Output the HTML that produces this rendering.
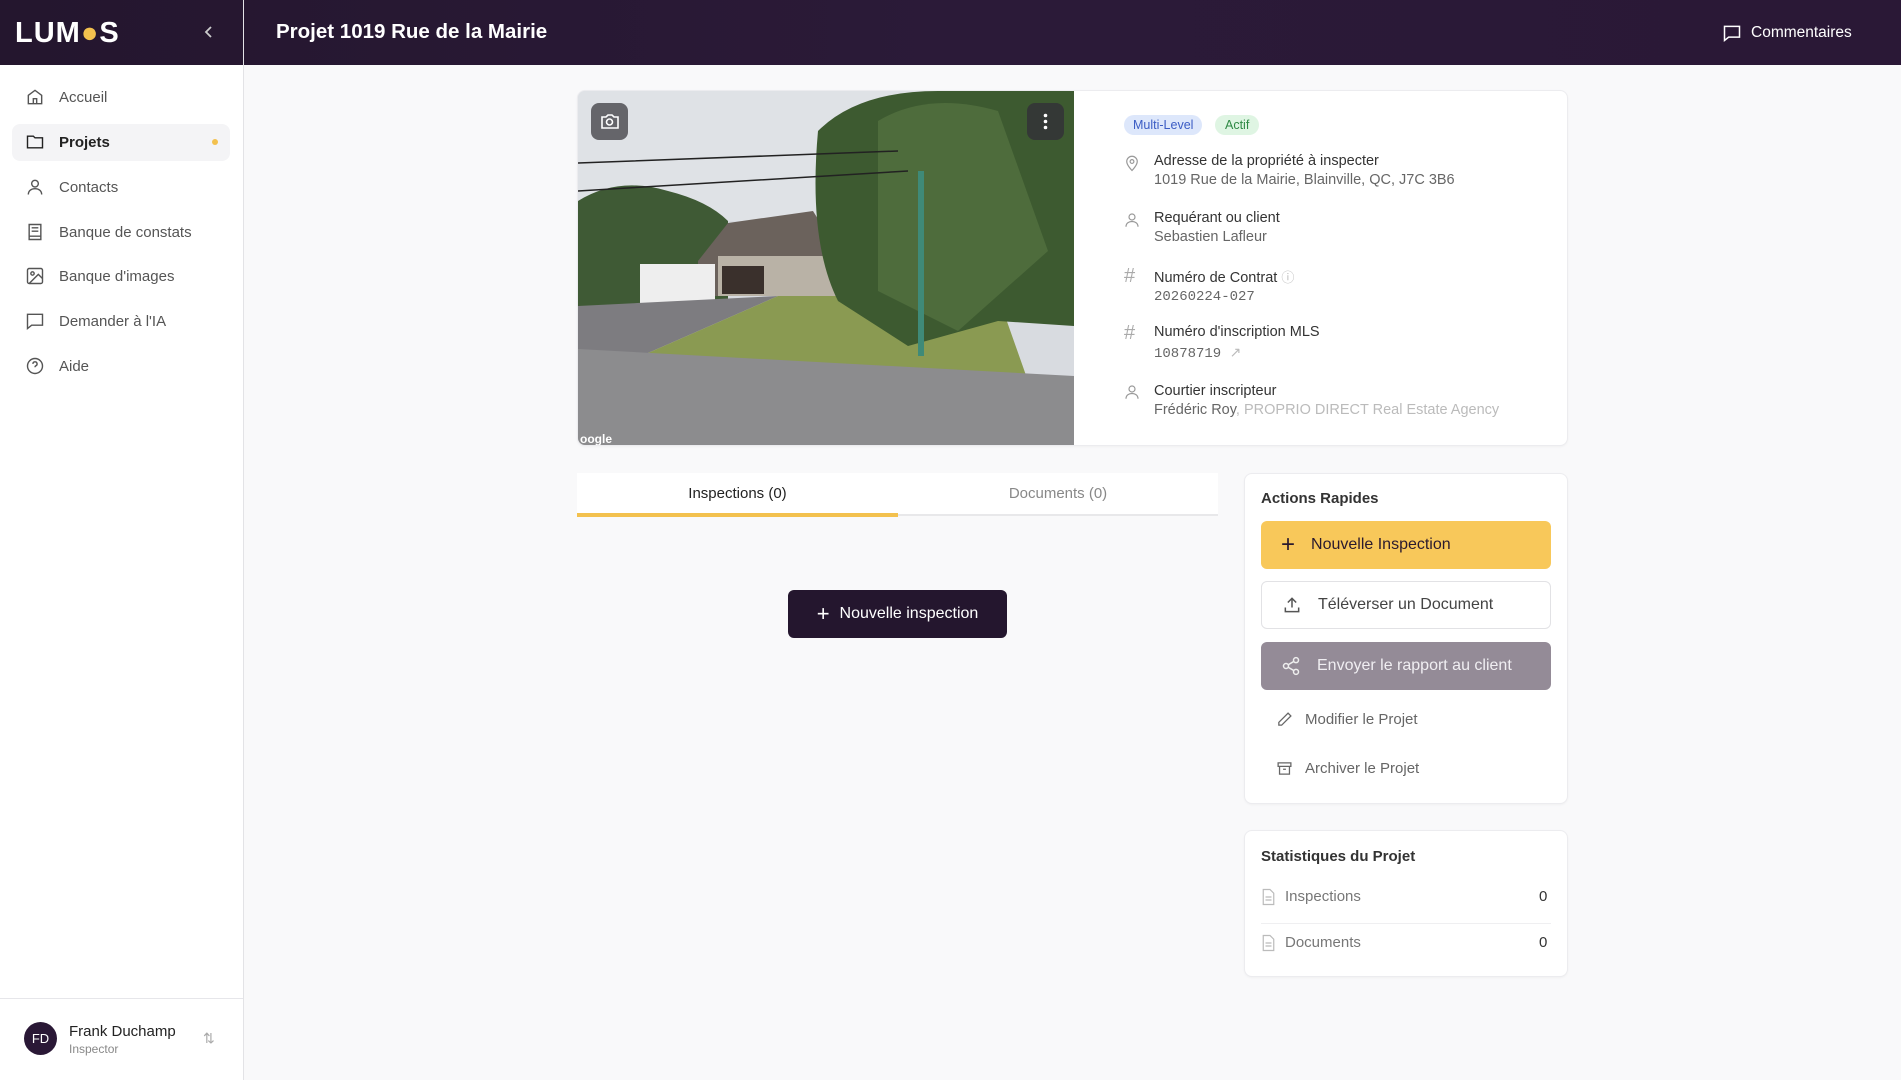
<!DOCTYPE html>
<html><head><meta charset="utf-8"><style>
*{box-sizing:border-box;margin:0;padding:0}
body{width:1901px;height:1080px;overflow:hidden;background:#f9f9fa;font-family:"Liberation Sans",sans-serif;color:#222;position:relative}
.hdr{position:absolute;left:0;top:0;width:1901px;height:65px;background:linear-gradient(90deg,#24162e,#2b1a38 50%,#2a1836);}
.sep{position:absolute;left:243px;top:0;width:1px;height:1080px;background:#e3e3e6}
.side{position:absolute;left:0;top:65px;width:243px;height:1015px;background:#fff}
.logo{position:absolute;left:15px;top:17px;font-size:29px;font-weight:bold;color:#fff;letter-spacing:1px}
.nav{position:absolute;left:25px;font-size:15px;color:#555;display:flex;align-items:center;gap:14px}
.nav svg{width:20px;height:20px;fill:none;stroke:#555;stroke-width:1.7}
.abs{position:absolute}
.card{position:absolute;background:#fff;border:1px solid #ececef;border-radius:8px;box-shadow:0 1px 2px rgba(0,0,0,.04)}
.ic{fill:none;stroke:#999;stroke-width:1.6}
.lbl{font-size:14.5px;color:#333}
.val{font-size:14.5px;color:#666;margin-top:5px}
.mono{font-family:"Liberation Mono",monospace;font-size:14px}
.btn{position:absolute;left:1261px;width:290px;height:48px;border-radius:6px;display:flex;align-items:center;padding-left:20px;gap:16px;font-size:16px}
</style></head><body>
<div class="hdr"></div>
<div class="sep"></div>
<div class="logo">LUM<span style="color:#f3c14e">●</span>S</div>
<svg class="abs" style="left:202px;top:24px" width="14" height="16" viewBox="0 0 14 16"><path d="M9 3L4 8l5 5" stroke="#ccc" stroke-width="1.8" fill="none"/></svg>
<div class="abs" style="left:276px;top:20px;font-size:20.5px;font-weight:bold;color:#fff">Projet 1019 Rue de la Mairie</div>
<svg class="abs" style="left:1722px;top:23px" width="20" height="20" viewBox="0 0 24 24"><path d="M3 4h18v13H8l-5 4z" stroke="#fff" stroke-width="1.8" fill="none"/></svg>
<div class="abs" style="left:1751px;top:24px;font-size:15.5px;color:#fff">Commentaires</div>

<div class="side"></div>
<div class="abs" style="left:12px;top:124px;width:218px;height:37px;background:#f4f4f6;border-radius:8px"></div>
<div class="abs" style="left:212px;top:139px;width:6px;height:6px;border-radius:50%;background:#f3c14e"></div>
<div class="nav" style="top:87px"><svg viewBox="0 0 24 24"><path d="M4 10l8-6 8 6v10H4zM10 20v-6h4v6"/></svg>Accueil</div>
<div class="nav" style="top:132px;color:#222;font-weight:bold"><svg viewBox="0 0 24 24" style="stroke:#222"><path d="M3 5h7l2 2h9v12H3z"/></svg>Projets</div>
<div class="nav" style="top:177px"><svg viewBox="0 0 24 24"><circle cx="12" cy="8" r="4"/><path d="M4 21c0-5 4-7 8-7s8 2 8 7"/></svg>Contacts</div>
<div class="nav" style="top:222px"><svg viewBox="0 0 24 24"><path d="M5 3h14v18H5zM8 7h8M8 11h8M5 17h14"/></svg>Banque de constats</div>
<div class="nav" style="top:266px"><svg viewBox="0 0 24 24"><rect x="3" y="3" width="18" height="18" rx="2"/><circle cx="9" cy="9" r="2"/><path d="M21 15l-5-5L5 21"/></svg>Banque d'images</div>
<div class="nav" style="top:311px"><svg viewBox="0 0 24 24"><path d="M3 4h18v13H8l-5 4z"/></svg>Demander à l'IA</div>
<div class="nav" style="top:356px"><svg viewBox="0 0 24 24"><circle cx="12" cy="12" r="9"/><path d="M9.5 9.5a2.5 2.5 0 1 1 3.5 2.3c-.7.3-1 .8-1 1.7M12 17h.01"/></svg>Aide</div>
<div class="abs" style="left:0;top:998px;width:243px;height:1px;background:#e6e6ea"></div>
<div class="abs" style="left:24px;top:1022px;width:33px;height:33px;border-radius:50%;background:#2a1836;color:#fff;font-size:13px;display:flex;align-items:center;justify-content:center">FD</div>
<div class="abs" style="left:69px;top:1023px;font-size:15px;color:#222">Frank Duchamp</div>
<div class="abs" style="left:69px;top:1042px;font-size:12px;color:#888">Inspector</div>
<div class="abs" style="left:203px;top:1030px;font-size:14px;color:#aaa">⇅</div>

<!-- top card -->
<div class="card" style="left:577px;top:90px;width:991px;height:356px;overflow:hidden">
<svg class="abs" style="left:0;top:0" width="496" height="356" viewBox="0 0 496 356" preserveAspectRatio="none">
<rect width="496" height="356" fill="#d8dbe0"/>
<rect y="0" width="496" height="130" fill="#dfe2e6"/>
<path d="M0 110 Q40 85 90 100 Q130 110 150 130 L150 215 L0 215z" fill="#3f5a35"/>
<path d="M120 170 L150 132 L235 120 L260 160 L260 205 L120 205z" fill="#6b625c"/>
<rect x="140" y="165" width="120" height="40" fill="#b9b2a6"/>
<rect x="144" y="175" width="42" height="28" fill="#3a302c"/>
<rect x="62" y="173" width="75" height="40" fill="#eeeeee"/>
<path d="M0 215 L200 205 L70 262 L0 262z" fill="#7d7c80"/>
<path d="M70 262 L200 205 L420 205 L450 290 L0 280z" fill="#8a9a52"/>
<path d="M240 40 Q280 0 360 0 L496 0 L496 235 L420 230 L330 255 L260 210 Q230 150 240 40z" fill="#3d5a30"/>
<path d="M300 30 Q350 0 420 20 L470 160 L380 240 L300 200z" fill="#4e6c3c"/>
<rect x="340" y="80" width="6" height="185" fill="#3f8a78"/>
<path d="M0 258 L496 285 L496 356 L0 356z" fill="#8c8c8e"/>
<path d="M0 72 L320 60 M0 100 L330 80" stroke="#222" stroke-width="1.5"/>
<text x="2" y="352" font-size="12" fill="#fff" font-family="Liberation Sans" font-weight="bold">oogle</text>
</svg>
<div class="abs" style="left:13px;top:12px;width:37px;height:37px;border-radius:8px;background:rgba(70,70,75,.8)"><svg width="37" height="37" viewBox="0 0 37 37"><path d="M11 14h4l2-2h4l2 2h4v11H11z" stroke="#fff" stroke-width="1.6" fill="none"/><circle cx="18.5" cy="19" r="3" stroke="#fff" stroke-width="1.6" fill="none"/></svg></div>
<div class="abs" style="left:449px;top:12px;width:37px;height:37px;border-radius:8px;background:rgba(50,50,55,.85)"><svg width="37" height="37"><circle cx="18.5" cy="12.5" r="1.8" fill="#fff"/><circle cx="18.5" cy="18.5" r="1.8" fill="#fff"/><circle cx="18.5" cy="24.5" r="1.8" fill="#fff"/></svg></div>
<div class="abs" style="left:546px;top:24px;padding:3px 9px;border-radius:10px;background:#dde7fb;color:#3b5cc4;font-size:12.5px">Multi-Level</div>
<div class="abs" style="left:637px;top:24px;padding:3px 10px;border-radius:10px;background:#dff5e3;color:#2f8a45;font-size:12.5px">Actif</div>
<svg class="abs" style="left:545px;top:62px" width="18" height="20" viewBox="0 0 24 24"><path class="ic" d="M12 22s7-7 7-12a7 7 0 0 0-14 0c0 5 7 12 7 12z"/><circle class="ic" cx="12" cy="10" r="2.5"/></svg>
<div class="abs" style="left:576px;top:62px"><div class="lbl">Adresse de la propriété à inspecter</div><div class="val" style="margin-top:3px">1019 Rue de la Mairie, Blainville, QC, J7C 3B6</div></div>
<svg class="abs" style="left:545px;top:119px" width="18" height="20" viewBox="0 0 24 24"><circle class="ic" cx="12" cy="8" r="4"/><path class="ic" d="M4 21c0-5 4-7 8-7s8 2 8 7"/></svg>
<div class="abs" style="left:576px;top:119px"><div class="lbl">Requérant ou client</div><div class="val" style="margin-top:3px">Sebastien Lafleur</div></div>
<div class="abs" style="left:546px;top:174px;font-size:20px;color:#aaa">#</div>
<div class="abs" style="left:576px;top:176px"><div class="lbl">Numéro de Contrat <span style="color:#bbb;font-size:13px">ⓘ</span></div><div class="val mono" style="margin-top:3px">20260224-027</div></div>
<div class="abs" style="left:546px;top:231px;font-size:20px;color:#aaa">#</div>
<div class="abs" style="left:576px;top:233px"><div class="lbl">Numéro d'inscription MLS</div><div class="val mono" style="margin-top:4px">10878719 <span style="color:#bbb;font-family:'Liberation Sans'">↗</span></div></div>
<svg class="abs" style="left:545px;top:291px" width="18" height="20" viewBox="0 0 24 24"><circle class="ic" cx="12" cy="8" r="4"/><path class="ic" d="M4 21c0-5 4-7 8-7s8 2 8 7"/></svg>
<div class="abs" style="left:576px;top:292px"><div class="lbl">Courtier inscripteur</div><div class="val" style="margin-top:3px">Frédéric Roy<span style="color:#bbb">, PROPRIO DIRECT Real Estate Agency</span></div></div>
</div>

<!-- tabs -->
<div class="abs" style="left:577px;top:473px;width:641px;height:43px;background:#fff;border-bottom:2px solid #e8e8ea"></div>
<div class="abs" style="left:577px;top:513px;width:321px;height:4px;background:#f3c14e"></div>
<div class="abs" style="left:577px;top:485px;width:321px;text-align:center;font-size:15px;color:#222">Inspections (0)</div>
<div class="abs" style="left:898px;top:485px;width:320px;text-align:center;font-size:15px;color:#888">Documents (0)</div>
<div class="abs" style="left:788px;top:590px;width:219px;height:48px;background:#24162e;border-radius:6px;color:#fff;font-size:16px;display:flex;align-items:center;justify-content:center;gap:10px"><span style="font-size:22px;font-weight:300">+</span>Nouvelle inspection</div>

<!-- actions -->
<div class="card" style="left:1244px;top:473px;width:324px;height:331px"></div>
<div class="abs" style="left:1261px;top:490px;font-size:15px;font-weight:bold;color:#333">Actions Rapides</div>
<div class="btn" style="top:521px;background:#f8c85a;color:#2a1a2e"><span style="font-size:24px;font-weight:300">+</span>Nouvelle Inspection</div>
<div class="btn" style="top:581px;background:#fff;border:1px solid #e2e2e5;color:#444"><svg width="20" height="20" viewBox="0 0 24 24"><path d="M12 15V4M7 9l5-5 5 5M4 15v5h16v-5" stroke="#555" stroke-width="1.8" fill="none"/></svg>Téléverser un Document</div>
<div class="btn" style="top:642px;background:#948b97;color:#f0eef2"><svg width="20" height="20" viewBox="0 0 24 24"><circle cx="18" cy="5" r="3" stroke="#eee" stroke-width="1.8" fill="none"/><circle cx="6" cy="12" r="3" stroke="#eee" stroke-width="1.8" fill="none"/><circle cx="18" cy="19" r="3" stroke="#eee" stroke-width="1.8" fill="none"/><path d="M8.6 13.5l6.8 4M15.4 6.5l-6.8 4" stroke="#eee" stroke-width="1.8"/></svg>Envoyer le rapport au client</div>
<svg class="abs" style="left:1276px;top:711px" width="17" height="17" viewBox="0 0 24 24"><path d="M17 3l4 4L8 20H4v-4z" stroke="#666" stroke-width="1.8" fill="none"/></svg>
<div class="abs" style="left:1305px;top:711px;font-size:15px;color:#666">Modifier le Projet</div>
<svg class="abs" style="left:1276px;top:760px" width="17" height="17" viewBox="0 0 24 24"><path d="M3 4h18v5H3zM5 9v11h14V9M10 13h4" stroke="#666" stroke-width="1.8" fill="none"/></svg>
<div class="abs" style="left:1305px;top:760px;font-size:15px;color:#666">Archiver le Projet</div>

<!-- stats -->
<div class="card" style="left:1244px;top:830px;width:324px;height:147px"></div>
<div class="abs" style="left:1261px;top:848px;font-size:15px;font-weight:bold;color:#333">Statistiques du Projet</div>
<svg class="abs" style="left:1261px;top:888px" width="15" height="18" viewBox="0 0 20 24"><path d="M3 2h9l5 5v15H3zM6 12h8M6 16h8" stroke="#bbb" stroke-width="1.6" fill="none"/></svg>
<div class="abs" style="left:1285px;top:888px;font-size:15px;color:#777">Inspections</div>
<div class="abs" style="left:1539px;top:888px;font-size:15px;color:#333">0</div>
<div class="abs" style="left:1261px;top:923px;width:290px;height:1px;background:#efeff1"></div>
<svg class="abs" style="left:1261px;top:934px" width="15" height="18" viewBox="0 0 20 24"><path d="M3 2h9l5 5v15H3zM6 12h8M6 16h8" stroke="#bbb" stroke-width="1.6" fill="none"/></svg>
<div class="abs" style="left:1285px;top:934px;font-size:15px;color:#777">Documents</div>
<div class="abs" style="left:1539px;top:934px;font-size:15px;color:#333">0</div>
</body></html>
